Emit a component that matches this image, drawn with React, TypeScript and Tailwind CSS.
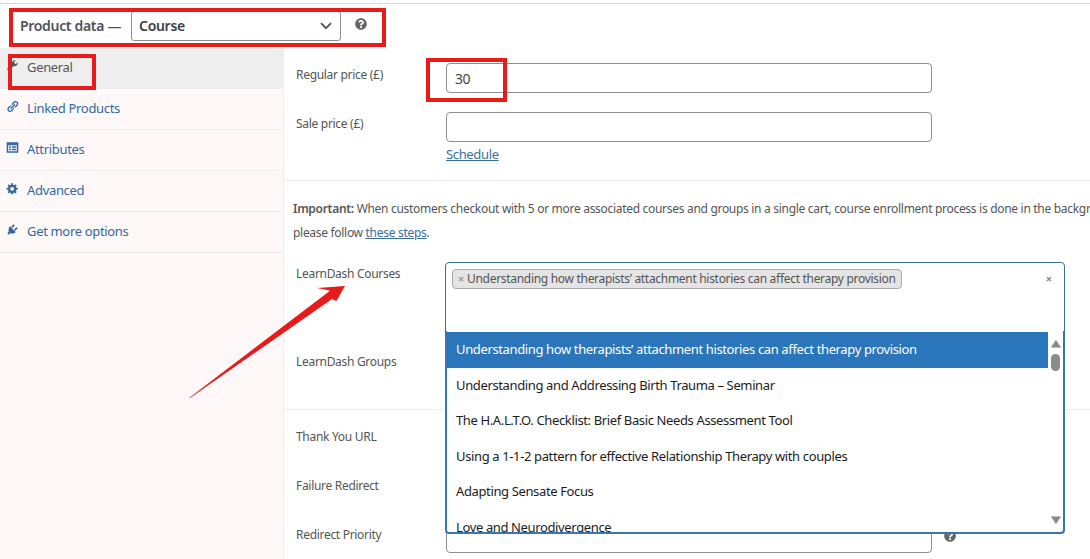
import React from "react";
import { FaQuestionCircle } from "react-icons/fa";
import clsx from "clsx";

type TabItem = {
  label: string;
  icon: React.ReactNode;
  className: string;
  active?: boolean;
};

const WRENCH =
  "M16.68 9.77c-1.34 1.34-3.3 1.67-4.95.99l-5.41 6.52c-.99.99-2.59.99-3.58 0s-.99-2.59 0-3.57l6.52-5.42c-.68-1.65-.35-3.61.99-4.95 1.28-1.28 3.12-1.62 4.72-1.06l-2.89 2.89 2.82 2.82 2.86-2.87c.53 1.58.18 3.39-1.08 4.65z";
const LINK =
  "M17.74 2.76c1.68 1.69 1.68 4.41 0 6.1l-1.53 1.52c-1.12 1.12-2.7 1.47-4.14 1.09l2.62-2.61.76-.77.76-.76c.84-.84.84-2.2 0-3.04-.84-.85-2.2-.85-3.04 0l-.77.76-3.38 3.38c-.37-1.44-.02-3.02 1.1-4.14l1.52-1.53c1.69-1.68 4.42-1.68 6.1 0zM8.59 13.43l5.34-5.34c.42-.42.42-1.1 0-1.52-.44-.43-1.13-.39-1.53 0l-5.33 5.34c-.42.42-.42 1.1 0 1.52.44.43 1.13.39 1.52 0zm-.76 2.29l4.14-4.15c.38 1.44.03 3.02-1.09 4.14l-1.52 1.53c-1.69 1.68-4.41 1.68-6.1 0-1.68-1.68-1.68-4.42 0-6.1l1.53-1.52c1.12-1.12 2.7-1.47 4.14-1.1l-4.14 4.15c-.85.84-.85 2.2 0 3.05.84.84 2.2.84 3.04 0z";
const CARD =
  "M1 2h18v16H1zM3.2 6.5v9.3h13.6V6.5zM4.5 8h3v2.4h-3zM9 8h6.8v2.4H9zM4.5 12h3v2.4h-3zM9 12h6.8v2.4H9z";
const GEAR =
  "M18 12h-2.18c-.17.7-.44 1.35-.81 1.93l1.54 1.54-2.1 2.1-1.54-1.54c-.58.36-1.23.63-1.91.79V19H8v-2.18c-.68-.16-1.33-.43-1.91-.79l-1.54 1.54-2.12-2.12 1.54-1.54c-.36-.58-.63-1.23-.79-1.91H1V9.03h2.17c.16-.7.44-1.35.8-1.94L2.43 5.55l2.1-2.1 1.54 1.54c.58-.37 1.24-.64 1.93-.81V2h3v2.18c.68.16 1.33.43 1.91.79l1.54-1.54 2.12 2.12-1.54 1.54c.36.59.64 1.24.8 1.94H18V12zm-8.5 1.5c1.66 0 3-1.34 3-3s-1.34-3-3-3-3 1.34-3 3 1.34 3 3 3z";
const PLUG =
  "M13.11 4.36L9.87 7.6 8 5.73l3.24-3.24c.35-.34 1.05-.2 1.56.32.52.51.66 1.21.31 1.55zm-8 1.77l.91-1.12 9.01 9.01-1.19.84c-.71.71-2.63 1.16-3.82 1.16H6.14L4.9 17.26c-.59.59-1.54.59-2.12 0-.59-.58-.59-1.53 0-2.12l1.24-1.24v-3.88c0-1.13.4-3.19 1.09-3.89zm7.26 3.97l3.24-3.24c.34-.35 1.04-.21 1.55.31.52.51.66 1.21.31 1.55l-3.24 3.25z";

function Dashicon({ d }: { d: string }) {
  return (
    <svg viewBox="0 0 20 20" fill="currentColor" fillRule="evenodd" className="h-[13px] w-[13px]">
      <path d={d} />
    </svg>
  );
}

const tabs: TabItem[] = [
  { label: "General", icon: <Dashicon d={WRENCH} />, className: "tracking-[-0.33px]", active: true },
  { label: "Linked Products", icon: <Dashicon d={LINK} />, className: "tracking-[-0.33px]" },
  { label: "Attributes", icon: <Dashicon d={CARD} />, className: "tracking-[-0.33px]" },
  { label: "Advanced", icon: <Dashicon d={GEAR} />, className: "tracking-[-0.33px]" },
  { label: "Get more options", icon: <Dashicon d={PLUG} />, className: "tracking-[-0.33px]" },
];

const courses = [
  { title: "Understanding how therapists’ attachment histories can affect therapy provision", className: "tracking-[-0.37px]" },
  { title: "Understanding and Addressing Birth Trauma – Seminar", className: "tracking-[-0.37px]" },
  { title: "The H.A.L.T.O. Checklist: Brief Basic Needs Assessment Tool", className: "tracking-[-0.37px]" },
  { title: "Using a 1-1-2 pattern for effective Relationship Therapy with couples", className: "tracking-[-0.37px]" },
  { title: "Adapting Sensate Focus", className: "tracking-[-0.37px]" },
  { title: "Love and Neurodivergence", className: "tracking-[-0.37px]" },
];

function Highlight({ className }: { className: string }) {
  return (
    <div className={clsx("pointer-events-none absolute z-20 border-4 border-[#e81a1a]", className)} />
  );
}

function Label({ children }: { children: React.ReactNode }) {
  return (
    <label className="w-[162px] shrink-0 pl-3 text-xs leading-6 tracking-[-0.3px] text-[#555]">
      {children}
    </label>
  );
}

function TextInput({ value }: { value?: string }) {
  return (
    <input
      type="text"
      defaultValue={value}
      className="h-[30px] w-[486px] rounded-[4px] border border-[#8c8f94] bg-white px-2 text-sm tracking-[-0.4px] text-[#444]"
    />
  );
}

function CourseDropdown() {
  return (
    <div className="absolute -left-px top-[69px] z-10 flex h-[203px] w-[620px] rounded-b-[4px] border-2 border-t-0 border-[#3a76ae] bg-white">
      <ul className="mt-px h-[200px] flex-1 overflow-hidden text-[13px] text-[#1c1c1c]">
        {courses.map((course, index) => (
          <li
            key={course.title}
            className={clsx(
              "flex items-center whitespace-nowrap pl-[9px]",
              index === 0 ? "h-9 bg-[#2b75bb] text-white" : "h-[35.4px]",
              course.className
            )}
          >
            {course.title}
          </li>
        ))}
      </ul>
      <div className="flex w-[15px] flex-col items-center pb-2 pt-[9px]">
        <svg viewBox="0 0 10 8" className="h-2 w-[10px]" fill="#8b8b8b">
          <path d="M5 .3 9.6 7.2H.4z" stroke="#8b8b8b" strokeWidth=".6" strokeLinejoin="round" />
        </svg>
        <div className="mt-[6px] h-[17px] w-[9px] rounded-full bg-[#8b8b8b]" />
        <svg viewBox="0 0 10 8" className="mt-auto h-2 w-[10px]" fill="#8b8b8b">
          <path d="M5 7.7.4.8h9.2z" stroke="#8b8b8b" strokeWidth=".6" strokeLinejoin="round" />
        </svg>
      </div>
    </div>
  );
}

export default function App() {
  return (
    <div className="relative flex h-[559px] w-[1090px] flex-col overflow-hidden bg-white pt-[3px] font-['Noto_Sans','Open_Sans',sans-serif] text-[#555]">
      <header className="flex h-[45px] shrink-0 items-start border-t border-[#dcdcde]">
        <span className="ml-5 mt-3 w-[111px] text-sm font-semibold leading-5 tracking-[-0.32px] text-[#50535a]">
          Product data —
        </span>
        <button
          type="button"
          className="mt-[7px] flex h-[30px] w-[210px] items-center justify-between rounded-[3px] border border-[#8c8f94] pl-[7px] pr-2 text-sm font-semibold tracking-[-0.3px] text-[#3c4045]"
        >
          Course
          <svg viewBox="0 0 12 8" className="h-2 w-3" fill="none" stroke="#50535a" strokeWidth="1.8">
            <path d="m1 1.2 5 5 5-5" />
          </svg>
        </button>
        <FaQuestionCircle className="ml-[14px] mt-[14px] h-3 w-3 text-[#666]" />
      </header>

      <div className="flex min-h-0 flex-1">
        <nav className="w-[284px] shrink-0 border-r border-[#eee] bg-[#fef8f8]">
          {tabs.map((tab) => (
            <a
              key={tab.label}
              className={clsx(
                "flex h-[41px] items-center border-b border-[#eee] pl-[6px] text-[13px]",
                tab.active ? "bg-[#eee] text-[#555]" : "text-[#3168a5]"
              )}
            >
              <span className="mb-[5px] mr-2">{tab.icon}</span>
              <span className={tab.className}>{tab.label}</span>
            </a>
          ))}
        </nav>

        <main className="flex-1">
          <section className="h-[133px] border-b border-[#eee] pt-[15px]">
            <div className="flex">
              <Label>Regular price (£)</Label>
              <TextInput value="30" />
            </div>
            <div className="mt-[19px] flex">
              <Label>Sale price (£)</Label>
              <div>
                <TextInput />
                <a className="mt-[2px] block text-[13px] leading-5 tracking-[-0.35px] text-[#3b6e9f] underline">
                  Schedule
                </a>
              </div>
            </div>
          </section>

          <section className="h-[229px] border-b border-[#eee] pt-4">
            <p className="whitespace-nowrap pl-[9px] text-xs leading-6 tracking-[-0.3px]">
              <strong className="font-semibold">Important:</strong> When customers checkout with 5 or more
              associated courses and groups in a single cart, course enrollment process is done in the background,
              <br />
              please follow <a className="text-[#3b6e9f] underline">these steps</a>.
            </p>
            <div className="mt-[17px] flex">
              <Label>LearnDash Courses</Label>
              <div className="relative h-[71px]">
                <div className="-ml-px flex h-[71px] w-[620px] items-start justify-between rounded-t-[4px] border border-[#3b6e9f] pl-[6px] pr-3 pt-[6px]">
                  <span className="flex h-5 items-center whitespace-nowrap rounded-[4px] border border-[#aaa] bg-[#e4e4e4] px-[5px] text-xs tracking-[-0.3px] text-[#555]">
                    <span className="mr-[3px] text-[11px] font-bold text-[#999]">×</span>
                    {courses[0].title}
                  </span>
                  <span className="mt-px text-[11px] font-bold leading-[18px] text-[#888]">×</span>
                </div>
                <CourseDropdown />
              </div>
            </div>
            <div className="mt-[17px] flex">
              <Label>LearnDash Groups</Label>
            </div>
          </section>

          <section className="flex flex-col gap-[19px] pt-[15px]">
            <div className="flex">
              <Label>Thank You URL</Label>
              <TextInput />
            </div>
            <div className="flex">
              <Label>Failure Redirect</Label>
              <TextInput />
            </div>
            <div className="flex">
              <Label>Redirect Priority</Label>
              <TextInput />
              <FaQuestionCircle className="ml-3 mt-[7px] h-3 w-3 text-[#666]" />
            </div>
          </section>
        </main>
      </div>

      <Highlight className="left-[9px] top-2 h-[39px] w-[377px]" />
      <Highlight className="left-2 top-[54px] h-9 w-[88px]" />
      <Highlight className="left-[426px] top-[58px] h-11 w-[81px]" />
      <svg className="pointer-events-none absolute left-[188px] top-[285px] z-20 h-[115px] w-[160px]" viewBox="0 0 160 115" fill="#e81a1a">
        <path d="M1 113 141 6.5 141.500 5.500 129 3 157 1 149 15 148 16 144 14 2 113Z" />
      </svg>
    </div>
  );
}
